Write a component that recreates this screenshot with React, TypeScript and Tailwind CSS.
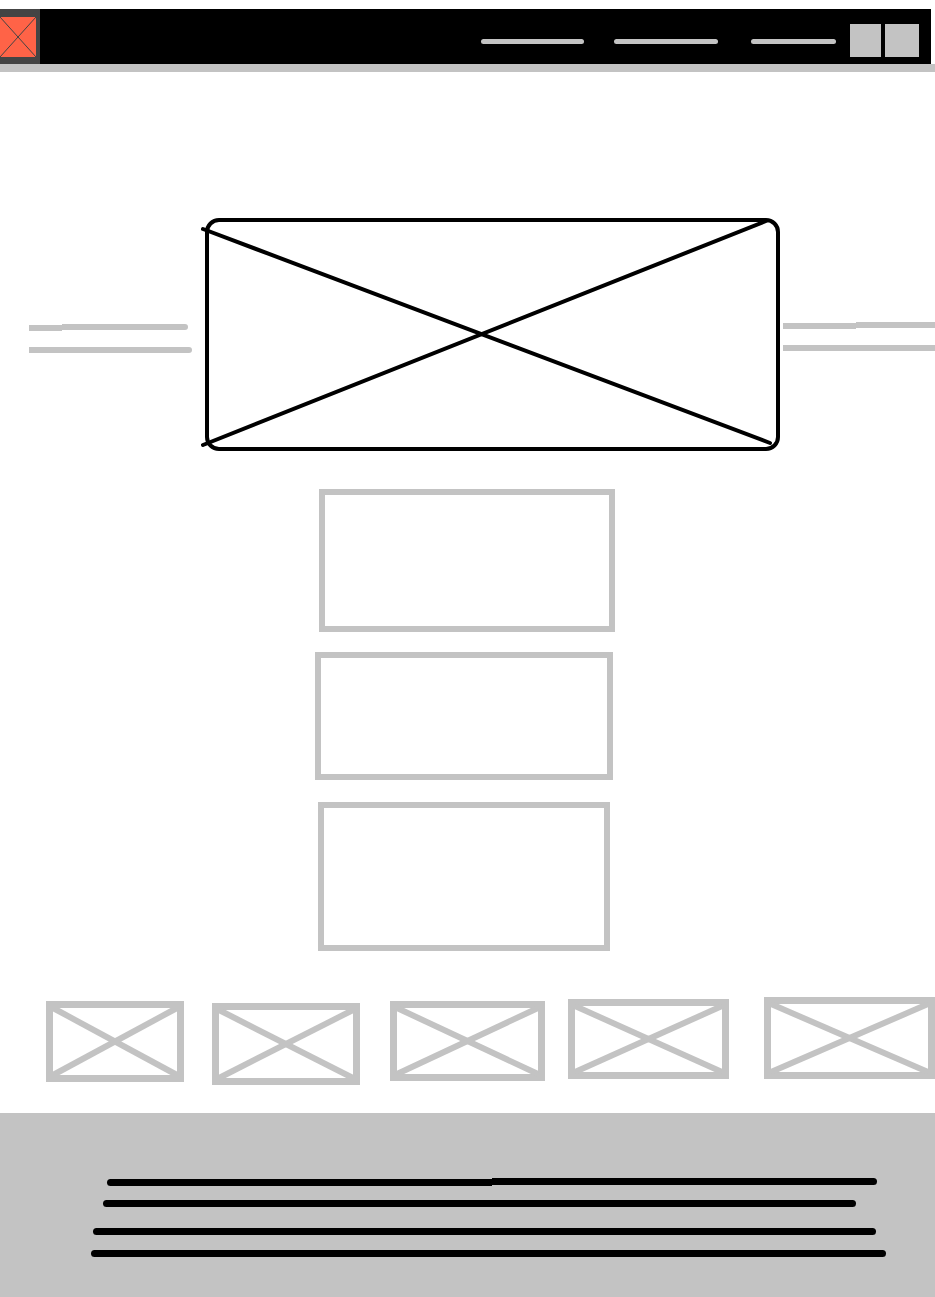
const grey = "#c3c3c3";

function XBox({ w, h, stroke = 7, diag = 6, color = grey }: { w: number; h: number; stroke?: number; diag?: number; color?: string }) {
  const s = stroke / 2;
  return (
    <svg width={w} height={h} viewBox={`0 0 ${w} ${h}`} className="block shrink-0">
      <rect x={s} y={s} width={w - stroke} height={h - stroke} fill="none" stroke={color} strokeWidth={stroke} />
      <line x1={stroke} y1={stroke} x2={w - stroke} y2={h - stroke} stroke={color} strokeWidth={diag} />
      <line x1={stroke} y1={h - stroke} x2={w - stroke} y2={stroke} stroke={color} strokeWidth={diag} />
    </svg>
  );
}

function HeroImage() {
  return (
    <svg width={580} height={236} viewBox="0 0 580 236" className="block shrink-0">
      <rect x={6} y={4} width={571} height={229} rx={12} fill="none" stroke="#000" strokeWidth={4} />
      <line x1={2} y1={13} x2={569} y2={227} stroke="#000" strokeWidth={4} strokeLinecap="round" />
      <line x1={2} y1={229} x2={565} y2={5} stroke="#000" strokeWidth={4} strokeLinecap="round" />
    </svg>
  );
}

function Logo() {
  return (
    <div className="flex h-full w-[40px] items-center bg-[#444444]">
      <svg width={36} height={40} viewBox="0 0 36 40" className="block">
        <rect x={0} y={0} width={36} height={40} fill="#ff6347" />
        <line x1={0} y1={0} x2={36} y2={40} stroke="#444" strokeWidth={1} />
        <line x1={0} y1={40} x2={36} y2={0} stroke="#444" strokeWidth={1} />
      </svg>
    </div>
  );
}

export default function App() {
  return (
    <div className="flex min-h-[1297px] w-[935px] flex-col bg-white">
      <header className="mt-[9px]">
        <div className="flex h-[55px] w-[931px] items-center bg-black">
          <Logo />
          <nav className="ml-auto mt-[9px] flex items-center gap-[30px]">
            <span className="block h-[5px] w-[103px] rounded-full bg-[#c3c3c3]" />
            <span className="block h-[5px] w-[104px] rounded-full bg-[#c3c3c3]" />
            <span className="ml-[3px] block h-[5px] w-[85px] rounded-full bg-[#c3c3c3]" />
          </nav>
          <div className="ml-[14px] mr-[12px] mt-[7px] flex gap-[4px]">
            <span className="block h-[33px] w-[31px] bg-[#c3c3c3]" />
            <span className="block h-[33px] w-[34px] bg-[#c3c3c3]" />
          </div>
        </div>
        <div className="h-[8px] bg-[#c3c3c3]" />
      </header>

      <main className="flex flex-col">
        <section className="mt-[144px] flex items-center">
          <div className="ml-[29px] mt-[8px] flex w-[172px] flex-col gap-[16px]">
            <div className="flex items-start">
              <span className="mt-[1px] block h-[6px] w-[33px] bg-[#c3c3c3]" />
              <span className="block h-[6px] w-[126px] rounded-r-full bg-[#c3c3c3]" />
            </div>
            <span className="block h-[6px] w-[163px] rounded-r-full bg-[#c3c3c3]" />
          </div>
          <HeroImage />
          <div className="ml-[2px] mt-[4px] flex flex-1 flex-col gap-[16px]">
            <div className="flex items-start">
              <span className="mt-[1px] block h-[6px] w-[73px] bg-[#c3c3c3]" />
              <span className="block h-[6px] flex-1 bg-[#c3c3c3]" />
            </div>
            <span className="block h-[6px] w-full bg-[#c3c3c3]" />
          </div>
        </section>

        <section className="mt-[37px] flex flex-col">
          <div className="ml-[319px] h-[143px] w-[296px] border-[6px] border-[#c3c3c3]" />
          <div className="ml-[315px] mt-[20px] h-[128px] w-[298px] border-[6px] border-[#c3c3c3]" />
          <div className="ml-[318px] mt-[22px] h-[149px] w-[292px] border-[6px] border-[#c3c3c3]" />
        </section>

        <section className="mt-[46px] flex items-start pl-[46px]">
          <div className="mt-[4px]"><XBox w={138} h={81} /></div>
          <div className="ml-[28px] mt-[6px]"><XBox w={148} h={82} /></div>
          <div className="ml-[30px] mt-[4px]"><XBox w={155} h={80} /></div>
          <div className="ml-[23px] mt-[2px]"><XBox w={161} h={80} /></div>
          <div className="ml-[35px]"><XBox w={171} h={82} /></div>
        </section>
      </main>

      <footer className="mt-[28px] flex h-[185px] flex-col bg-[#c3c3c3] pt-[65px]">
        <div className="ml-[107px] flex items-start">
          <span className="mt-[1px] block h-[7px] w-[385px] rounded-l-full bg-black" />
          <span className="block h-[7px] w-[385px] rounded-r-full bg-black" />
        </div>
        <span className="ml-[103px] mt-[14px] block h-[7px] w-[753px] rounded-full bg-black" />
        <span className="ml-[93px] mt-[21px] block h-[7px] w-[783px] rounded-full bg-black" />
        <span className="ml-[91px] mt-[15px] block h-[7px] w-[795px] rounded-full bg-black" />
      </footer>
    </div>
  );
}
